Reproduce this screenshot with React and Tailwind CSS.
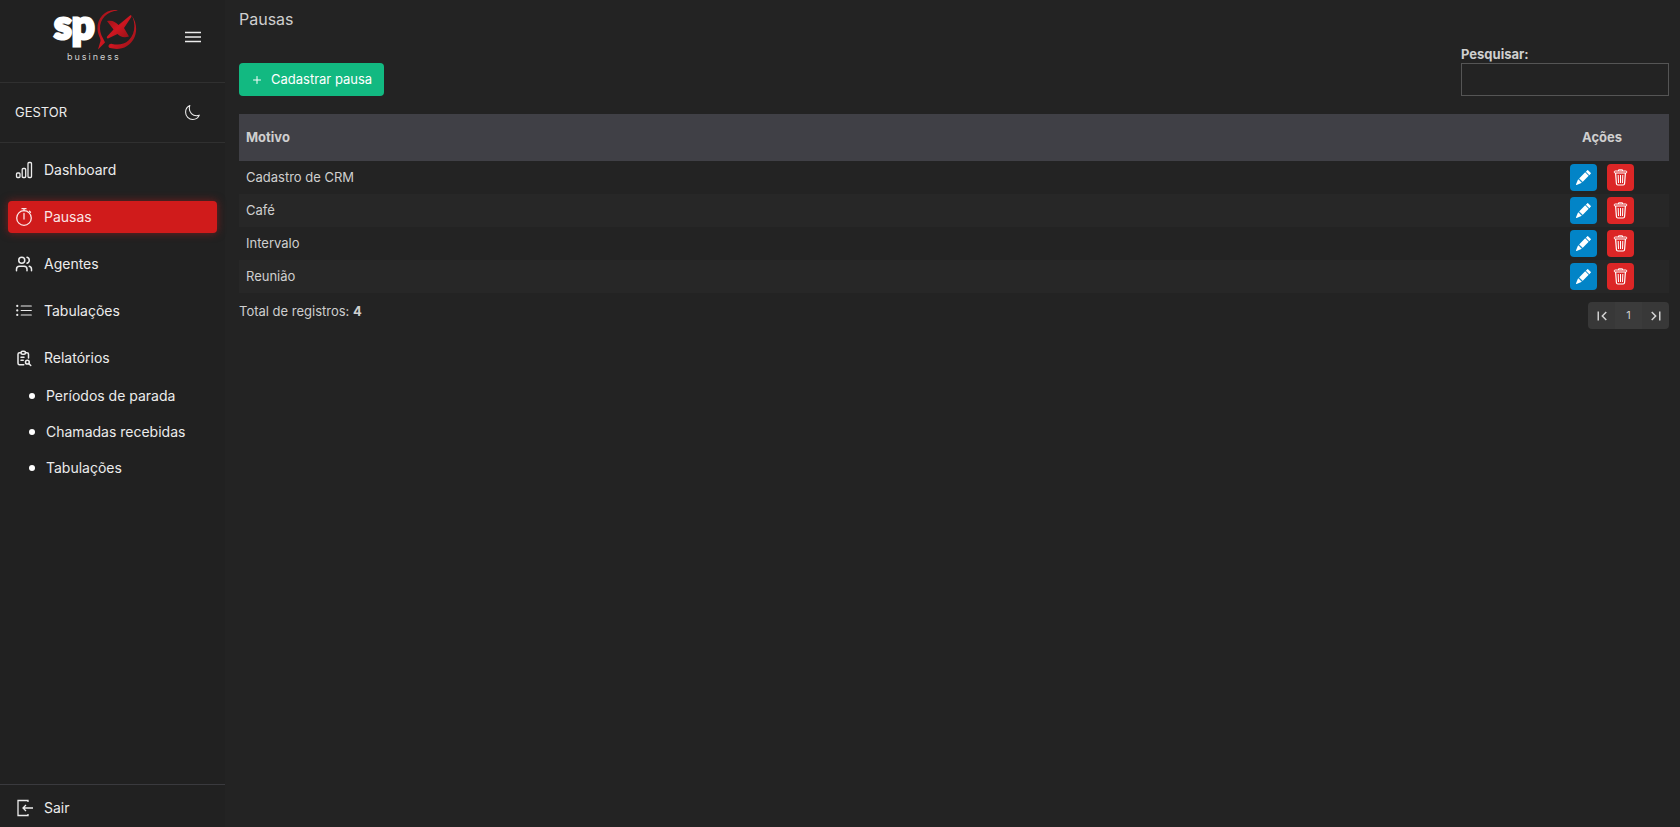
import { useState } from "react";
import { BsListUl, BsPencilFill } from "react-icons/bs";
import { IoMoonOutline } from "react-icons/io5";
import { LuPlus, LuUsers } from "react-icons/lu";
import { MdFirstPage, MdLastPage } from "react-icons/md";
import { TbReportSearch } from "react-icons/tb";

const BarsIcon = () => (
  <svg width="18" height="18" viewBox="0 0 18 18" fill="none" stroke="currentColor" strokeWidth="1.3">
    <rect x="1.500" y="12" width="3.500" height="4.500" rx="1" />
    <rect x="7.200" y="7.500" width="3.500" height="9" rx="1" />
    <rect x="13" y="1.500" width="3.500" height="15" rx="1" />
  </svg>
);

const StopwatchIcon = () => (
  <svg
    width="18"
    height="18"
    viewBox="0 0 18 18"
    fill="none"
    stroke="currentColor"
    strokeWidth="1.3"
    strokeLinecap="round"
  >
    <circle cx="9" cy="10" r="7.300" />
    <path d="M7 .7h4M9 .7v2M9 5.500V11M14.500 3.200l1 1" />
  </svg>
);

const MenuIcon = () => (
  <svg width="16" height="12" viewBox="0 0 16 12" stroke="currentColor" strokeWidth="1.5">
    <path d="M0 1.500h16M0 6h16M0 10.500h16" />
  </svg>
);

const TrashIcon = () => (
  <svg width="15" height="17" viewBox="0 0 15 17" fill="none" stroke="currentColor">
    <path d="M5.500 2V.8h4V2" />
    <rect x="1.200" y="2" width="12.600" height="2" rx="1" />
    <path d="M2.600 4l.8 10.500q.1 1.500 1.500 1.500h5.200q1.400 0 1.500-1.500L12.400 4" strokeWidth="1.2" />
    <path d="M5.200 6l.3 8M7.500 6v8M9.800 6l-.3 8" />
  </svg>
);

const ExitIcon = () => (
  <svg width="18" height="18" viewBox="0 0 18 18" fill="none" stroke="currentColor" strokeWidth="1.3">
    <path d="M13 3V1.500H3v15h10V15" />
    <path d="M18 9H8M11 6 8 9l3 3" />
  </svg>
);

const Logo = () => (
  <svg width="86" height="63" viewBox="-2 -9 86 63" role="img" aria-label="spx business">
    <defs>
      <linearGradient id="spxRed" x1="0" y1="0" x2="1" y2="1">
        <stop offset="0" stopColor="#8f1218" />
        <stop offset="0.5" stopColor="#cf1620" />
        <stop offset="1" stopColor="#8f1218" />
      </linearGradient>
    </defs>
    <text
      x="1"
      y="30"
      fontFamily="Lato, sans-serif"
      fontSize="40"
      fontWeight="900"
      fill="#fff"
      stroke="#fff"
      strokeWidth="3"
    >
      sp
    </text>
    <g fill="url(#spxRed)">
      <path d="M65 1.5C54 -1 44 8 44.500 20C44.700 26 48 29 47.500 32L45 40.500L52 33.500C51 30 47.500 27 47 20C46.500 10 54 2 65 1.500Z" />
      <path d="M79 7C86 17 84 31 74 37C68 41 61 40 57 39C54 38 56 34 59 35C65 36 71 36 76 31C82 25 83 15 79 7Z" />
      <path d="M54 12C60 11 62 13 65.500 16L77 6.500C78.500 6 79 7 78 8.500L71 19L76 27.500C70 29.500 67 27 64.500 25L55 29.500C53.500 29.500 53.500 28 54.500 27L60.500 20.500Z" />
    </g>
    <text
      x="14"
      y="51"
      fontFamily="Inter, sans-serif"
      fontSize="9"
      fill="#d0d0d0"
      className="tracking-[2px]"
    >
      business
    </text>
  </svg>
);

const menu = [
  { label: "Dashboard", icon: <BarsIcon /> },
  { label: "Pausas", icon: <StopwatchIcon />, active: true },
  { label: "Agentes", icon: <LuUsers size={18} /> },
  { label: "Tabulações", icon: <BsListUl size={18} /> },
  { label: "Relatórios", icon: <TbReportSearch size={18} /> },
];

const reports = ["Períodos de parada", "Chamadas recebidas", "Tabulações"];

const pauses = ["Cadastro de CRM", "Café", "Intervalo", "Reunião"];

const Sidebar = () => (
  <aside className="flex w-[225px] shrink-0 flex-col bg-[#212121] text-[#ececec]">
    <div className="flex h-[83px] items-start justify-between border-b border-[#303030] pl-[51px] pr-6">
      <a href="#inicio">
        <Logo />
      </a>
      <button type="button" aria-label="Recolher menu" className="mt-[31px]">
        <MenuIcon />
      </button>
    </div>

    <div className="flex h-[60px] items-center justify-between border-b border-[#303030] pl-[15px] pr-6">
      <span className="text-[13px]">GESTOR</span>
      <button type="button" aria-label="Alternar tema">
        <IoMoonOutline size={17} />
      </button>
    </div>

    <nav className="px-2 pt-[11px]">
      <ul className="flex flex-col gap-[15px]">
        {menu.map((item) => (
          <li key={item.label}>
            <a
              href="#"
              className={
                item.active
                  ? "flex h-8 items-center gap-[11px] rounded bg-[#d01b1b] pl-[7px] text-sm text-[#fbe4e4] shadow-[0_0_8px_#d01b1b80]"
                  : "flex h-8 items-center gap-[11px] rounded pl-[7px] text-sm"
              }
            >
              {item.icon}
              {item.label}
            </a>
          </li>
        ))}
      </ul>
      <ul className="mt-1">
        {reports.map((report) => (
          <li key={report}>
            <a href="#" className="flex h-9 items-center gap-[11px] pl-[21px] text-sm">
              <span className="size-1.5 rounded-full bg-white" />
              {report}
            </a>
          </li>
        ))}
      </ul>
    </nav>

    <a
      href="#sair"
      className="mt-auto flex h-[43px] items-center gap-[11px] border-t border-[#3a3a3e] pl-[15px] pt-1 text-sm"
    >
      <ExitIcon />
      Sair
    </a>
  </aside>
);

const Pagination = () => (
  <div className="flex overflow-hidden rounded bg-[#383838] text-[#d0d0d0]">
    <button type="button" aria-label="Primeira página" className="flex size-[27px] items-center justify-center">
      <MdFirstPage size={18} />
    </button>
    <button type="button" className="size-[27px] bg-[#3b3b3b] text-[11px]">
      1
    </button>
    <button type="button" aria-label="Última página" className="flex size-[27px] items-center justify-center">
      <MdLastPage size={18} />
    </button>
  </div>
);

const App = () => {
  const [search, setSearch] = useState("");

  const filtered = pauses.filter((pause) =>
    pause.toLowerCase().includes(search.toLowerCase())
  );

  return (
    <div className="flex min-h-screen bg-[#232323] font-[Inter,sans-serif] text-[13px] text-[#cfcfcf]">
      <Sidebar />
      <main className="min-w-0 grow pl-[14px] pr-[11px] pt-[7px]">
        <h1 className="text-base leading-6">Pausas</h1>

        <div className="mt-[14px] flex items-end justify-between">
          <button
            type="button"
            className="flex h-[33px] items-center gap-2 rounded bg-[#12b981] px-3 text-white"
          >
            <LuPlus size={12} />
            Cadastrar pausa
          </button>
          <div className="flex w-[208px] flex-col">
            <label htmlFor="pesquisar" className="font-bold leading-[18px]">
              Pesquisar:
            </label>
            <input
              id="pesquisar"
              type="text"
              value={search}
              onChange={(e) => setSearch(e.target.value)}
              className="h-[33px] border border-[#555] bg-transparent px-2 outline-none"
            />
          </div>
        </div>

        <table className="mt-[18px] w-full">
          <thead>
            <tr className="h-[47px] bg-[#404046]">
              <th className="pl-[7px] text-left font-bold">Motivo</th>
              <th className="w-[134px] text-center font-bold">Ações</th>
            </tr>
          </thead>
          <tbody>
            {filtered.map((pause) => (
              <tr key={pause} className="h-[33px] even:bg-[#272727]">
                <td className="pl-[7px]">{pause}</td>
                <td>
                  <div className="flex justify-center gap-[10px] text-white">
                    <button
                      type="button"
                      aria-label={`Editar ${pause}`}
                      className="flex size-[27px] items-center justify-center rounded bg-[#0284c7]"
                    >
                      <BsPencilFill size={15} />
                    </button>
                    <button
                      type="button"
                      aria-label={`Excluir ${pause}`}
                      className="flex size-[27px] items-center justify-center rounded bg-[#dc2626]"
                    >
                      <TrashIcon />
                    </button>
                  </div>
                </td>
              </tr>
            ))}
          </tbody>
        </table>

        <div className="flex items-start justify-between pt-[9px]">
          <p>
            Total de registros: <strong>{filtered.length}</strong>
          </p>
          <Pagination />
        </div>
      </main>
    </div>
  );
};

export default App;
